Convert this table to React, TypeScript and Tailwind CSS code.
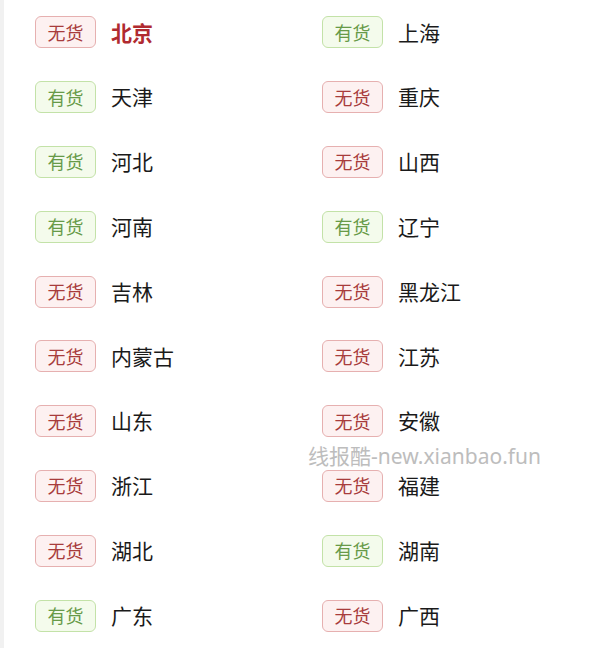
import React from "react";

const data: [boolean, string, boolean, string][] = [
  [false, "北京", true, "上海"],
  [true, "天津", false, "重庆"],
  [true, "河北", false, "山西"],
  [true, "河南", true, "辽宁"],
  [false, "吉林", false, "黑龙江"],
  [false, "内蒙古", false, "江苏"],
  [false, "山东", false, "安徽"],
  [false, "浙江", false, "福建"],
  [false, "湖北", true, "湖南"],
  [true, "广东", false, "广西"],
];

const font = { fontFamily: '"Noto Sans CJK SC", "Noto Sans", sans-serif' };

function Badge({ ok }: { ok: boolean }) {
  return ok ? (
    <span className="flex h-[32px] w-[61px] items-center justify-center rounded-[6px] border-[1.5px] border-[#c3e2a8] bg-[#f4fbec] text-[18px] text-[#679a48]">
      有货
    </span>
  ) : (
    <span className="flex h-[32px] w-[61px] items-center justify-center rounded-[6px] border-[1.5px] border-[#e6b0b0] bg-[#fdf1f1] text-[18px] text-[#a83c3c]">
      无货
    </span>
  );
}

function Item({ ok, name, bold }: { ok: boolean; name: string; bold?: boolean }) {
  return (
    <div className="flex h-[64.8px] items-center gap-[15px]">
      <Badge ok={ok} />
      <span
        className={
          bold
            ? "text-[21px] font-semibold text-[#b02a30]"
            : "text-[21px] text-[#1a1a1a]"
        }
      >
        {name}
      </span>
    </div>
  );
}

export default function App() {
  return (
    <div className="relative flex h-[648px] w-[600px] bg-white" style={font}>
      <div className="w-[4px] bg-[#f1f1f1]" />
      <div className="grid flex-1 grid-cols-[287px_1fr] pl-[31px]">
        {data.map(([okL, nL, okR, nR], i) => (
          <React.Fragment key={i}>
            <Item ok={okL} name={nL} bold={i === 0} />
            <Item ok={okR} name={nR} />
          </React.Fragment>
        ))}
      </div>
      <div
        className="absolute left-[308px] top-[441px] text-[21px] text-[#bdbdbd]"
        style={{ fontFamily: '"Noto Sans", "Noto Sans CJK SC", sans-serif' }}
      >
        线报酷-new.xianbao.fun
      </div>
    </div>
  );
}
